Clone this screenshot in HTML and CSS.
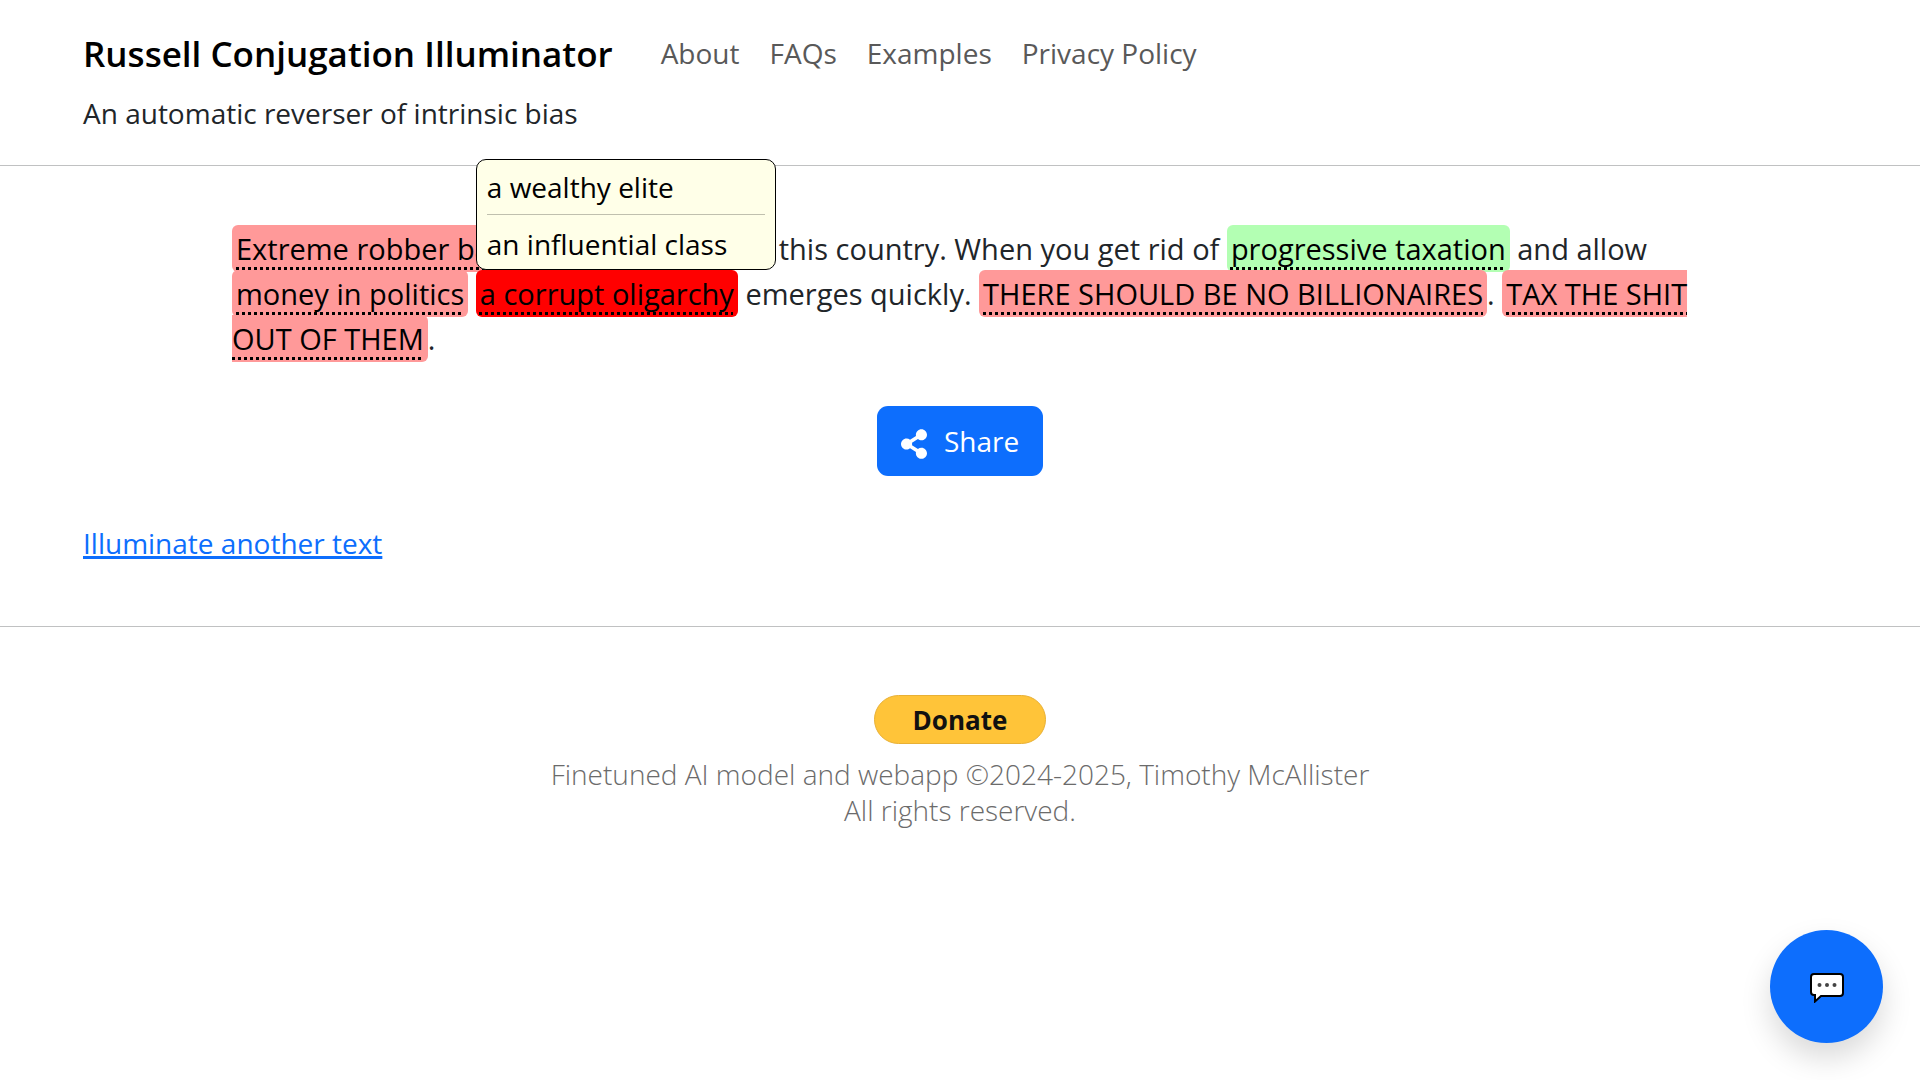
FILE: index.html
```html
<!DOCTYPE html>
<html lang="en">
<head>
  <meta charset="UTF-8" />
  <meta name="viewport" content="width=device-width, initial-scale=1" />
  <title>Russell Conjugation Illuminator</title>
  <link rel="stylesheet" href="styles.css">
</head>
<body>

  <header class="site-header">
    <nav class="navbar">
      <a class="brand" href="#">Russell Conjugation Illuminator</a>
      <a class="nav-link" href="#about">About</a>
      <a class="nav-link" href="#faqs">FAQs</a>
      <a class="nav-link" href="#examples">Examples</a>
      <a class="nav-link" href="#privacy">Privacy Policy</a>
    </nav>
    <p class="tagline">An automatic reverser of intrinsic bias</p>
  </header>

  <main>
    <p class="result">
      <span class="phrase negative">Extreme robber barons</span> have overtaken this country. When you get rid of
      <span class="phrase positive">progressive taxation</span> and allow
      <span class="phrase negative">money in politics</span>
      <span class="phrase negative active">a corrupt oligarchy<span class="popup"><span class="option">a wealthy elite</span><span class="option">an influential class</span></span></span>
      emerges quickly.
      <span class="phrase negative">THERE SHOULD BE NO BILLIONAIRES</span>.
      <span class="phrase negative">TAX THE SHIT OUT OF THEM</span>.
    </p>

    <button class="share-button" type="button">
      <svg class="share-icon" viewBox="0 0 448 512" aria-hidden="true">
        <path fill="currentColor" d="M352 320c-22.608 0-43.387 7.819-59.79 20.895l-102.486-64.054a96.551 96.551 0 0 0 0-41.683l102.486-64.054C308.613 184.181 329.392 192 352 192c53.019 0 96-42.981 96-96S405.019 0 352 0s-96 42.981-96 96c0 7.158.79 14.13 2.276 20.841L155.79 180.895C139.387 167.819 118.608 160 96 160c-53.019 0-96 42.981-96 96s42.981 96 96 96c22.608 0 43.387-7.819 59.79-20.895l102.486 64.054A96.301 96.301 0 0 0 256 416c0 53.019 42.981 96 96 96s96-42.981 96-96-42.981-96-96-96z"/>
      </svg>
      Share
    </button>

    <a class="again-link" href="#">Illuminate another text</a>
  </main>

  <footer class="site-footer">
    <button class="donate-button" type="button">Donate</button>
    <p>Finetuned AI model and webapp ©2024-2025, Timothy McAllister<br>All rights reserved.</p>
  </footer>

  <button class="chat-button" type="button" aria-label="Send feedback">
    <svg class="chat-icon" viewBox="0 0 34 30" aria-hidden="true">
      <path fill="#fff" stroke="#000" stroke-width="2" d="M4 1h26q3 0 3 3v16q0 3-3 3H11l-6 5.500V22H4q-3 0-3-3V4q0-3 3-3z"/>
      <g fill="#444">
        <circle cx="9.500" cy="12" r="2"/>
        <circle cx="17" cy="12" r="2"/>
        <circle cx="24.500" cy="12" r="2"/>
      </g>
    </svg>
  </button>

</body>
</html>
```

FILE: styles.css
```css
body {
  margin: 0;
  font-family: "Segoe UI", "Open Sans", "Noto Sans", sans-serif;
  font-size: 28px;
  line-height: 45px;
  color: #212529;
  background: #fff;
}

p {
  margin: 0;
}

.site-header {
  padding: 31px 83px 29px;
  border-bottom: 1px solid #c0c1c2;
}

.navbar {
  display: flex;
  flex-wrap: wrap;
  align-items: center;
  column-gap: 30px;
  margin-bottom: 15px;
}

.brand {
  margin-right: 18px;
  font-size: 35px;
  font-weight: 600;
  color: #000;
  text-decoration: none;
}

.nav-link {
  color: #595959;
  text-decoration: none;
}

main {
  display: flex;
  flex-direction: column;
  align-items: flex-start;
  padding: 60px 83px;
  border-bottom: 1px solid #c0c1c2;
}

.result {
  margin-bottom: 45px;
  padding: 0 135px 0 149px;
  font-size: 29px;
}

.phrase {
  position: relative;
  padding: 4px;
  border-radius: 6px;
  color: #000;
  text-decoration: underline dotted 3px;
  text-underline-offset: 7px;
}

.negative {
  background: #ff9999;
}

.positive {
  background: #b3ffb3;
}

.active {
  background: #ff0000;
}

.popup {
  position: absolute;
  bottom: 100%;
  left: 0;
  z-index: 1;
  box-sizing: border-box;
  width: 300px;
  padding: 0 10px;
  border: 1px solid #000;
  border-radius: 10px;
  font-size: 28px;
  background: #ffffe8;
}

.option {
  display: block;
  padding: 5px 0 4px;
}

.option + .option {
  padding: 7px 0 2px;
  border-top: 1px solid #c0c0ae;
}

.share-button {
  display: flex;
  align-items: center;
  align-self: center;
  gap: 17px;
  height: 70px;
  margin-bottom: 45px;
  padding: 0 24px;
  border: none;
  border-radius: 11px;
  font: inherit;
  color: #fff;
  background: #0d6efd;
  cursor: pointer;
}

.share-icon {
  width: 26px;
  height: 30px;
  padding-top: 5px;
}

.again-link {
  color: #0d6efd;
  text-decoration-thickness: 3px;
}

.site-footer {
  padding: 68px 83px;
  text-align: center;
  font-weight: 300;
  line-height: 36px;
  color: #6b6b6b;
}

.donate-button {
  display: block;
  width: 172px;
  height: 49px;
  margin: 0 auto 12px;
  border: 1px solid #e8b035;
  border-radius: 25px;
  font: bold 26px "Open Sans", sans-serif;
  color: #111;
  background: #ffc439;
  cursor: pointer;
}

.chat-button {
  position: fixed;
  right: 37px;
  bottom: 37px;
  display: flex;
  align-items: center;
  justify-content: center;
  width: 113px;
  height: 113px;
  padding: 3px 0 0;
  border: none;
  border-radius: 50%;
  background: #0d6efd;
  box-shadow: 0 15px 30px rgba(0, 0, 0, 0.15);
  cursor: pointer;
}

.chat-icon {
  width: 34px;
  height: 30px;
}
```
